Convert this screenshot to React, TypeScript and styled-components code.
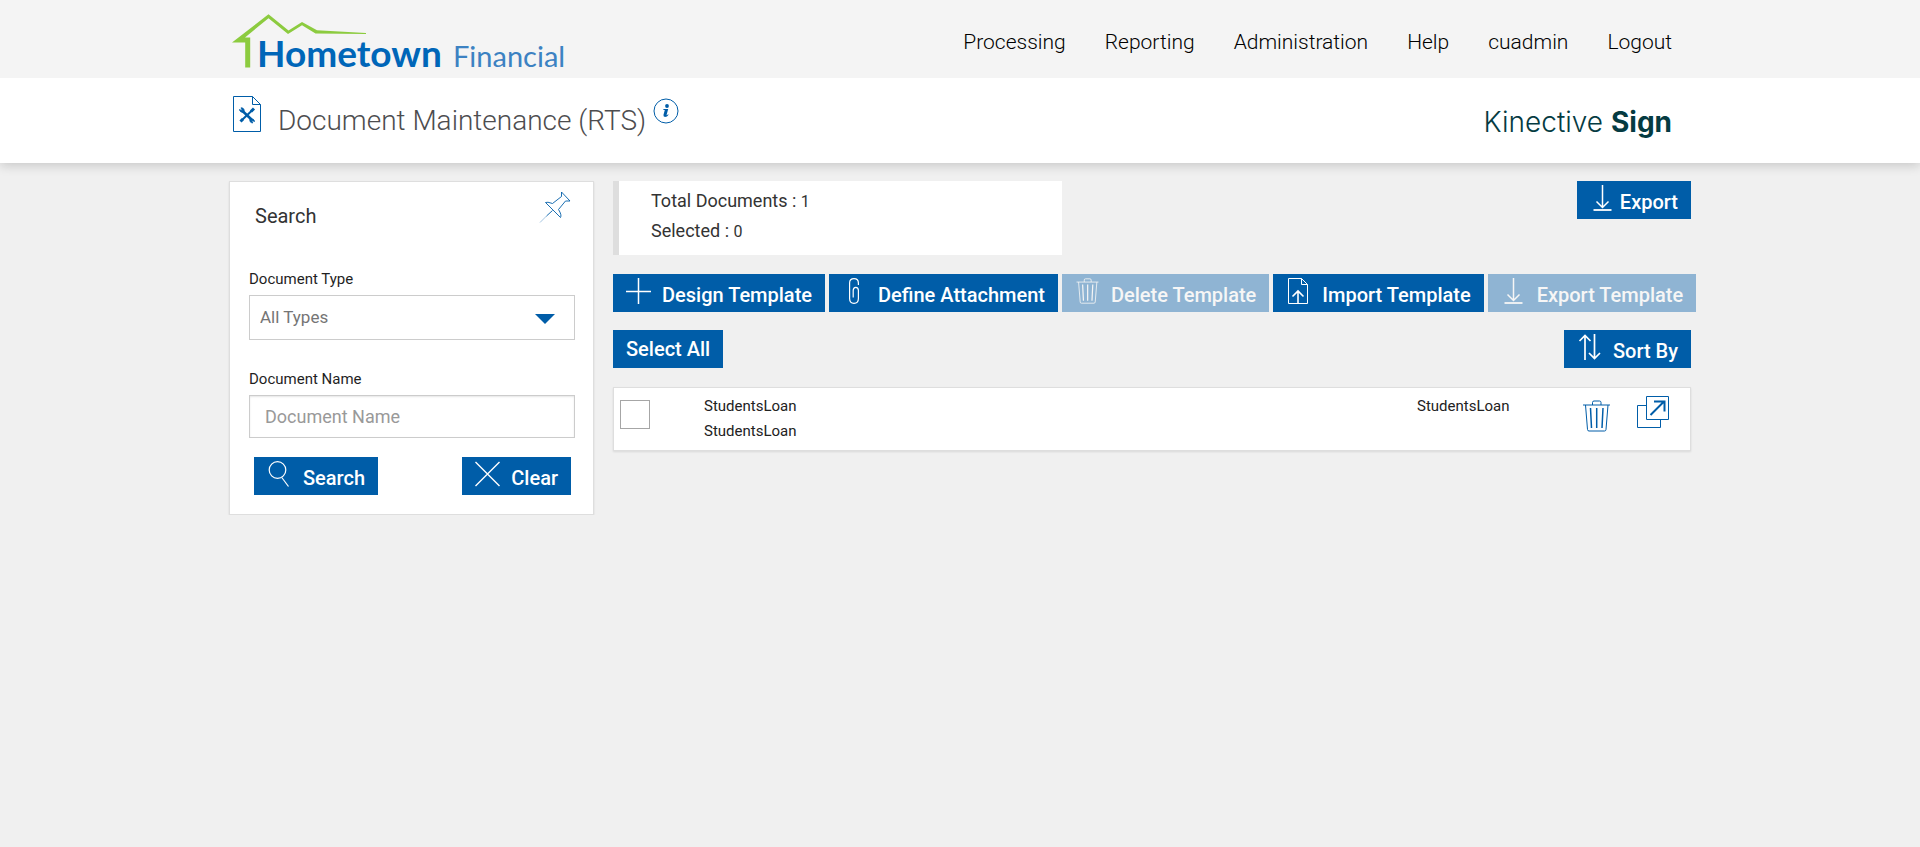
import React from "react";
import styled, { createGlobalStyle, css } from "styled-components";

const BLUE = "#005da8";

const GlobalStyle = createGlobalStyle`
  *, *::before, *::after { box-sizing: border-box; }
  body {
    margin: 0;
    background: #f0f0f0;
    color: #1f1f1f;
    font-family: Roboto, "Liberation Sans", sans-serif;
    font-size: 15px;
  }
  button, input, select { font-family: inherit; }
`;

const Container = styled.div`
  max-width: 1462px;
  margin: 0 auto;
`;

const TopBar = styled.header`
  position: relative;
  z-index: 1;
  background: #f4f4f4;
`;

const TopBarInner = styled(Container)`
  display: flex;
  align-items: flex-start;
  justify-content: space-between;
  padding: 10px 19px 0 3px;
`;

const Brand = styled.a`
  display: block;
  color: #0066b8;
  text-decoration: none;
  svg { display: block; }
`;

const Nav = styled.nav`
  display: flex;
  gap: 39px;
  padding-top: 18px;
`;

const NavLink = styled.a`
  color: #000;
  font-size: 21px;
  font-weight: 300;
  line-height: 28px;
  text-decoration: none;
`;

const TitleBar = styled.div`
  background: #fff;
  box-shadow: 0 3px 10px rgba(0, 0, 0, 0.16);
`;

const TitleInner = styled(Container)`
  display: flex;
  align-items: flex-start;
  justify-content: space-between;
  padding: 18px 19px 19px 3px;
`;

const TitleGroup = styled.div`
  display: flex;
  align-items: flex-start;
`;

const PageTitle = styled.h1`
  margin: 7px 7px 0 15px;
  color: #4d4d4f;
  font-size: 28px;
  font-weight: 300;
  line-height: 36px;
`;

const InfoButton = styled.button`
  display: block;
  margin-top: 2px;
  padding: 0;
  border: 0;
  background: none;
  svg { display: block; }
`;

const Product = styled.div`
  margin-top: 6px;
  padding-bottom: 2px;
  color: #053b42;
  font-family: Inter, "Liberation Sans", sans-serif;
  font-size: 28px;
  font-weight: 300;
  line-height: 40px;
  strong { font-weight: 700; }
`;

const Page = styled(Container)`
  display: grid;
  grid-template-columns: minmax(0, 1fr) minmax(0, 1078px);
  column-gap: 19px;
  align-items: start;
  padding-top: 18px;
`;

const cardEdge = css`
  background: #fff;
  border: 1px solid #dedede;
  box-shadow: 0 1px 2px rgba(0, 0, 0, 0.1);
`;

const SearchPanel = styled.form`
  ${cardEdge}
  padding: 9px 18px 19px 19px;
`;

const PanelHeader = styled.div`
  display: flex;
  align-items: flex-start;
  justify-content: space-between;
  margin-bottom: 40px;
  padding: 0 4px 0 6px;
`;

const PanelTitle = styled.h2`
  margin: 12px 0 0;
  color: #333;
  font-size: 20px;
  font-weight: 400;
  line-height: 26px;
`;

const IconButton = styled.button`
  display: block;
  padding: 0;
  border: 0;
  background: none;
  svg { display: block; }
`;

const FieldLabel = styled.label`
  display: block;
  margin-bottom: 6px;
  font-size: 15px;
  line-height: 20px;
`;

const SelectBox = styled.div`
  position: relative;
  margin-bottom: 29px;
  svg {
    position: absolute;
    right: 20px;
    top: 19px;
    pointer-events: none;
  }
`;

const Select = styled.select`
  display: block;
  width: 100%;
  padding: 10px;
  appearance: none;
  border: 1px solid #ccc;
  border-radius: 0;
  background: #fff;
  color: #757575;
  font-size: 17px;
  line-height: 23px;
`;

const TextInput = styled.input`
  display: block;
  width: 100%;
  margin-bottom: 19px;
  padding: 10px 15px;
  border: 1px solid #ccc;
  box-shadow: inset 0 1px 2px rgba(0, 0, 0, 0.1);
  color: #333;
  font-size: 18px;
  line-height: 21px;
  &::placeholder { color: #999; opacity: 1; }
`;

const PanelActions = styled.div`
  display: flex;
  justify-content: space-between;
  padding: 0 4px 0 5px;
`;

const ActionButton = styled.button<{ $compact?: boolean }>`
  display: flex;
  align-items: center;
  gap: ${(p) => (p.$compact ? 5 : 11)}px;
  padding: 4px 13px;
  border: 0;
  background: ${BLUE};
  color: #fff;
  font-size: 20px;
  font-weight: 500;
  line-height: 30px;
  white-space: nowrap;
  svg { flex: none; margin-bottom: 4px; }
  svg + span { padding-top: 4px; line-height: 26px; }
  &:disabled { opacity: 0.4; }
`;

const SummaryRow = styled.div`
  display: flex;
  align-items: flex-start;
  justify-content: space-between;
  margin-bottom: 19px;
`;

const Summary = styled.div`
  flex: 0 1 449px;
  padding: 5px 32px 9px;
  border-left: 6px solid #dedede;
  background: #fff;
  color: #333;
`;

const SummaryLine = styled.p`
  margin: 0;
  font-size: 18px;
  line-height: 30px;
  span { font-size: 16px; line-height: 20px; }
`;

const Toolbar = styled.div`
  display: flex;
  gap: 4px;
  margin-bottom: 18px;
`;

const ListControls = styled.div`
  display: flex;
  justify-content: space-between;
  margin-bottom: 19px;
`;

const DocumentList = styled.ul`
  margin: 0;
  padding: 0;
  list-style: none;
`;

const DocumentRow = styled.li`
  ${cardEdge}
  display: grid;
  grid-template-columns: 84px minmax(0, 1fr) 166px 54px 34px;
  align-items: start;
  padding: 6px 19px 6px 6px;
  color: #222;
`;

const CheckBox = styled.input`
  width: 30px;
  height: 29px;
  margin: 6px 0 0;
  appearance: none;
  border: 1px solid #a6a6a6;
  background: #fff;
  &:checked { background: ${BLUE}; }
`;

const DocumentText = styled.div`
  font-size: 15px;
  line-height: 25px;
`;

const TrashButton = styled(IconButton)`
  margin-top: 6px;
`;

const OpenButton = styled(IconButton)`
  margin-top: 2px;
`;

const Logo = () => (
  <svg width="346" height="68" viewBox="0 0 346 68" role="img" aria-label="Hometown Financial">
    <path
      fill="#8ccb3f"
      d="M0 32.5L36.5 4.2L56.5 20.5L70 12L85 20.2L134 23L134 24L83.500 23.400L70 15.300L56 24L36.500 8.200L13 27.500H18.200V57.500H13.200V32.500Z"
    />
    <text x="25" y="57" fill="#0066b8" fontFamily="Lato, sans-serif" fontSize="37" fontWeight="700">
      Hometown
    </text>
    <text x="221" y="57" fill="#3c82c2" fontFamily="Lato, sans-serif" fontSize="29" fontWeight="400">
      Financial
    </text>
  </svg>
);

const ToolsPageIcon = () => (
  <svg width="31" height="37" viewBox="0 0 31 37" fill="none" stroke={BLUE}>
    <path d="M1.500 .5H20.500L28.500 8.500V35.500H1.500Z M20.500 .5V8.500H28.500" />
    <path d="M10.500 15L19.500 23.500" strokeWidth="2.600" />
    <path d="M20 14.500L10.500 23.500" strokeWidth="2" />
    <path d="M7.500 13.500L10.500 15L9 11.800Q13 12 12 16Q8 17 7.500 13.500Z" fill={BLUE} strokeWidth=".8" />
    <path d="M22.500 25.500L19.500 24.200L20.800 27Q17 26.500 18 23Q22 22 22.500 25.500Z" fill={BLUE} strokeWidth=".8" />
    <path d="M22 12.500L19 15.500" strokeWidth="3" />
    <path d="M11 23L8.500 25.500" strokeWidth="3" />
  </svg>
);

const InfoIcon = () => (
  <svg width="26" height="26" viewBox="0 0 26 26">
    <circle cx="13" cy="13" r="12" fill="none" stroke={BLUE} />
    <g fill={BLUE}>
      <circle cx="14" cy="8" r="1.900" />
      <path d="M10.500 11H15.200L13.500 17.300Q14.300 17.300 15 16.300L15.600 16.700Q14.200 19 12 19Q10 18.800 10.500 16.800L11.800 12H10.300Z" />
    </g>
  </svg>
);

const PinIcon = () => (
  <svg width="32" height="32" viewBox="0 0 32 32" fill="none" stroke={BLUE}>
    <path d="M22.500 1V5.500L13.500 12.500Q8 10.500 6.500 11.500L21.500 26.500Q23 24 19.500 18.500L26.500 10L31 10Z" strokeWidth=".9" />
    <path d="M13.500 19.500L7.500 25" strokeWidth=".9" />
    <path d="M7.500 25L1 31.500" strokeWidth=".9" strokeOpacity=".4" />
  </svg>
);

const SearchIcon = () => (
  <svg width="25" height="26" viewBox="0 0 25 26" fill="none" stroke="#fff" strokeWidth="1.200">
    <circle cx="10.500" cy="9" r="8.300" />
    <path d="M14.800 16.500L21.500 25.500" />
  </svg>
);

const ClearIcon = () => (
  <svg width="25" height="26" viewBox="0 0 25 26" fill="none" stroke="#fff" strokeWidth="1.400">
    <path d="M.5 1L24.500 25M24.500 1L.5 25" />
  </svg>
);

const PlusIcon = () => (
  <svg width="25" height="26" viewBox="0 0 25 26" fill="none" stroke="#fff" strokeWidth="1.500">
    <path d="M12.500 0V26M0 13.500H25" />
  </svg>
);

const ClipIcon = () => (
  <svg width="25" height="26" viewBox="0 0 25 26" fill="none" stroke="#fff" strokeWidth="1.200">
    <path d="M16.400 7V5Q16.400 .7 12 .7Q7.600 .7 7.600 5V20.500Q7.600 25.300 12 25.300Q16.400 25.300 16.400 20.500V12.500Q16.400 9.300 13.800 9.300Q11.200 9.300 11.200 12.500V19.500" />
  </svg>
);

const TrashIcon = ({ color = "#fff", width = 25, height = 26 }: { color?: string; width?: number; height?: number }) => (
  <svg width={width} height={height} viewBox="0 0 27 32" preserveAspectRatio="xMidYMid meet" fill="none" stroke={color}>
    <path d="M0 5H27M9.500 5V2.500Q9.500 1 11 1H16.500Q18 1 18 2.500V5" />
    <path d="M2.500 5L4.500 29.500Q4.600 31 6 31H21.500Q22.900 31 23 29.500L25 5" />
    <path d="M7.500 8L8.500 28M13.700 8V28M20 8L19 28" strokeWidth="1.500" />
  </svg>
);

const ImportIcon = () => (
  <svg width="25" height="26" viewBox="0 0 25 26" fill="none" stroke="#fff">
    <path d="M2.500 .5H15.500L21.500 6.500V25.500H2.500Z M15.500 .5V6.500H21.500" />
    <path d="M12 25V13.500M6.500 18.500L12 13L17.500 18.500" strokeWidth="1.600" />
  </svg>
);

const DownloadIcon = () => (
  <svg width="25" height="26" viewBox="0 0 25 26" fill="none" stroke="#fff">
    <path d="M12.500 0V22M6.500 16.500L12.500 22.500L18.500 16.500" strokeWidth="1.500" />
    <path d="M3.500 25H21.500" strokeWidth="1.800" />
  </svg>
);

const SortIcon = () => (
  <svg width="25" height="26" viewBox="0 0 25 26" fill="none" stroke="#fff" strokeWidth="1.700">
    <path d="M8 26V1.500M2.500 7L8 1.500L13.500 7" />
    <path d="M17.500 0V24.500M12 19L17.500 24.500L23 19" />
  </svg>
);

const OpenIcon = () => (
  <svg width="32" height="32" viewBox="0 0 32 32" fill="none" stroke={BLUE}>
    <path d="M9.500 9.500H.5V31.500H23.500V23.500" />
    <path d="M9.500 .5H31.500V23.500H9.500Z" />
    <path d="M13.500 19L26.500 6M17 5.500H27.500V15.500" strokeWidth="2" />
  </svg>
);

const navItems = ["Processing", "Reporting", "Administration", "Help", "cuadmin", "Logout"];

const tools = [
  { label: "Design Template", icon: <PlusIcon /> },
  { label: "Define Attachment", icon: <ClipIcon /> },
  { label: "Delete Template", icon: <TrashIcon />, disabled: true },
  { label: "Import Template", icon: <ImportIcon /> },
  { label: "Export Template", icon: <DownloadIcon />, disabled: true },
];

const documents = [{ name: "StudentsLoan", description: "StudentsLoan", template: "StudentsLoan" }];

export default function App() {
  return (
    <>
      <GlobalStyle />
      <TopBar>
        <TopBarInner>
          <Brand href="#">
            <Logo />
          </Brand>
          <Nav>
            {navItems.map((item) => (
              <NavLink href="#" key={item}>
                {item}
              </NavLink>
            ))}
          </Nav>
        </TopBarInner>
      </TopBar>
      <TitleBar>
        <TitleInner>
          <TitleGroup>
            <ToolsPageIcon />
            <PageTitle>Document Maintenance (RTS)</PageTitle>
            <InfoButton type="button" aria-label="Information">
              <InfoIcon />
            </InfoButton>
          </TitleGroup>
          <Product>
            Kinective <strong>Sign</strong>
          </Product>
        </TitleInner>
      </TitleBar>
      <Page as="main">
        <SearchPanel onSubmit={(e) => e.preventDefault()}>
          <PanelHeader>
            <PanelTitle>Search</PanelTitle>
            <IconButton type="button" aria-label="Pin search">
              <PinIcon />
            </IconButton>
          </PanelHeader>
          <FieldLabel htmlFor="doc-type">Document Type</FieldLabel>
          <SelectBox>
            <Select id="doc-type">
              <option>All Types</option>
            </Select>
            <svg width="20" height="10" viewBox="0 0 20 10" fill={BLUE}>
              <path d="M0 0H20L10 10Z" />
            </svg>
          </SelectBox>
          <FieldLabel htmlFor="doc-name">Document Name</FieldLabel>
          <TextInput id="doc-name" type="text" placeholder="Document Name" />
          <PanelActions>
            <ActionButton type="submit">
              <SearchIcon />
              <span>Search</span>
            </ActionButton>
            <ActionButton type="reset">
              <ClearIcon />
              <span>Clear</span>
            </ActionButton>
          </PanelActions>
        </SearchPanel>
        <section>
          <SummaryRow>
            <Summary>
              <SummaryLine>
                Total Documents : <span>1</span>
              </SummaryLine>
              <SummaryLine>
                Selected : <span>0</span>
              </SummaryLine>
            </Summary>
            <ActionButton type="button" $compact>
              <DownloadIcon />
              <span>Export</span>
            </ActionButton>
          </SummaryRow>
          <Toolbar>
            {tools.map((tool) => (
              <ActionButton type="button" key={tool.label} disabled={tool.disabled}>
                {tool.icon}
                <span>{tool.label}</span>
              </ActionButton>
            ))}
          </Toolbar>
          <ListControls>
            <ActionButton type="button">Select All</ActionButton>
            <ActionButton type="button">
              <SortIcon />
              <span>Sort By</span>
            </ActionButton>
          </ListControls>
          <DocumentList>
            {documents.map((doc) => (
              <DocumentRow key={doc.name}>
                <CheckBox type="checkbox" aria-label={`Select ${doc.name}`} />
                <DocumentText>
                  <div>{doc.name}</div>
                  <div>{doc.description}</div>
                </DocumentText>
                <DocumentText>{doc.template}</DocumentText>
                <TrashButton type="button" aria-label="Delete">
                  <TrashIcon color={BLUE} width={27} height={32} />
                </TrashButton>
                <OpenButton type="button" aria-label="Open">
                  <OpenIcon />
                </OpenButton>
              </DocumentRow>
            ))}
          </DocumentList>
        </section>
      </Page>
    </>
  );
}
